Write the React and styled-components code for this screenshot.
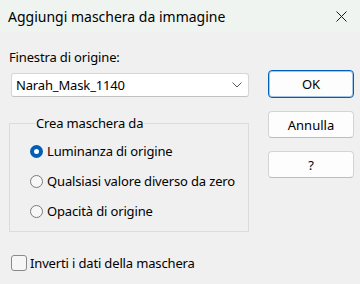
import React from 'react';
import styled, { createGlobalStyle } from 'styled-components';

const Global = createGlobalStyle`
  html, body { margin: 0; padding: 0; }
  body {
    width: 360px;
    height: 284px;
    overflow: hidden;
    background: #f0f0f0;
    font-family: "Noto Sans", "Open Sans", sans-serif;
    color: #000;
  }
`;

const Dialog = styled.div`
  width: 360px;
  height: 284px;
  display: flex;
  flex-direction: column;
  background: #f0f0f0;
  letter-spacing: -0.15px;
`;

const TitleBar = styled.div`
  height: 32px;
  flex: none;
  display: flex;
  align-items: center;
  justify-content: space-between;
  padding: 0 13px 0 8px;
  background: #eff4f1;
  font-size: 14px;
  letter-spacing: 0;
`;

const Title = styled.span`
  margin-top: 1px;
`;

const Body = styled.div`
  display: flex;
  gap: 19px;
  padding: 17px 6px 0 9px;
`;

const LeftCol = styled.div`
  width: 240px;
  display: flex;
  flex-direction: column;
`;

const RightCol = styled.div`
  display: flex;
  flex-direction: column;
  gap: 13px;
  padding-top: 21px;
`;

const Label = styled.div`
  font-size: 13px;
  line-height: 17px;
`;

const Combo = styled.div`
  margin: 7px 0 0 2px;
  height: 24px;
  box-sizing: border-box;
  display: flex;
  align-items: center;
  justify-content: space-between;
  padding: 0 6px 0 4px;
  background: #fff;
  border: 1px solid #d6d6d6;
  border-bottom-color: #c2c2c2;
  border-radius: 3px;
  font-size: 13px;
`;

const Group = styled.fieldset`
  margin: 19px 0 0 0;
  padding: 11px 0 8px 18px;
  height: 116px;
  box-sizing: border-box;
  border: 1px solid #dcdcdc;
  border-radius: 0;
  display: flex;
  flex-direction: column;
  gap: 10px;
  min-width: 0;
`;

const Legend = styled.legend`
  font-size: 13px;
  padding: 0 1px;
  margin-left: 7px;
  line-height: 14px;
`;

const Option = styled.label`
  display: flex;
  align-items: center;
  gap: 4px;
  font-size: 13px;
  height: 20px;
  margin-left: 2px;
`;

const Radio = styled.span`
  width: 13px;
  height: 13px;
  box-sizing: border-box;
  border-radius: 50%;
  flex: none;
  border: ${p => (p.$checked ? '4px solid #005fb8' : '1px solid #7a7a7a')};
  background: ${p => (p.$checked ? '#fff' : '#f7f7f7')};
`;

const CheckRow = styled.label`
  display: flex;
  align-items: center;
  gap: 3px;
  margin: 22px 0 0 2px;
  font-size: 13px;
`;

const CheckBox = styled.span`
  width: 16px;
  height: 16px;
  box-sizing: border-box;
  border: 1px solid #8a8a8a;
  border-radius: 3px;
  background: #f6f6f6;
  flex: none;
`;

const Button = styled.button`
  width: 86px;
  height: ${p => (p.$primary ? '28px' : '27px')};
  box-sizing: border-box;
  font-family: inherit;
  font-size: 13px;
  color: #000;
  background: #fdfdfd;
  border: 1px solid ${p => (p.$primary ? '#005fb8' : '#d4d4d4')};
  border-bottom-color: ${p => (p.$primary ? '#005fb8' : '#bdbdbd')};
  border-radius: 4px;
  box-shadow: ${p => (p.$primary ? 'inset 0 0 0 1px rgba(0,95,184,0.35)' : 'none')};
  padding: 0;
`;

const Chevron = () => (
  <svg width="10" height="6" viewBox="0 0 10 6">
    <path d="M0.5 0.5 L5 5 L9.5 0.5" fill="none" stroke="#5a5a5a" strokeWidth="1" />
  </svg>
);

const CloseIcon = () => (
  <svg width="11" height="11" viewBox="0 0 11 11">
    <path d="M0.5 0.5 L10.5 10.5 M10.5 0.5 L0.5 10.5" stroke="#1a1a1a" strokeWidth="1" />
  </svg>
);

const options = [
  { label: 'Luminanza di origine', checked: true },
  { label: 'Qualsiasi valore diverso da zero', checked: false },
  { label: 'Opacità di origine', checked: false },
];

const App = () => {
  return (
    <>
      <Global />
      <Dialog>
        <TitleBar>
          <Title>Aggiungi maschera da immagine</Title>
          <CloseIcon />
        </TitleBar>
        <Body>
          <LeftCol>
            <Label>Finestra di origine:</Label>
            <Combo>
              <span>Narah_Mask_1140</span>
              <Chevron />
            </Combo>
            <Group>
              <Legend>Crea maschera da</Legend>
              {options.map(o => (
                <Option key={o.label}>
                  <Radio $checked={o.checked} />
                  {o.label}
                </Option>
              ))}
            </Group>
            <CheckRow>
              <CheckBox />
              Inverti i dati della maschera
            </CheckRow>
          </LeftCol>
          <RightCol>
            <Button $primary>OK</Button>
            <Button>Annulla</Button>
            <Button>?</Button>
          </RightCol>
        </Body>
      </Dialog>
    </>
  );
};

export default App;
